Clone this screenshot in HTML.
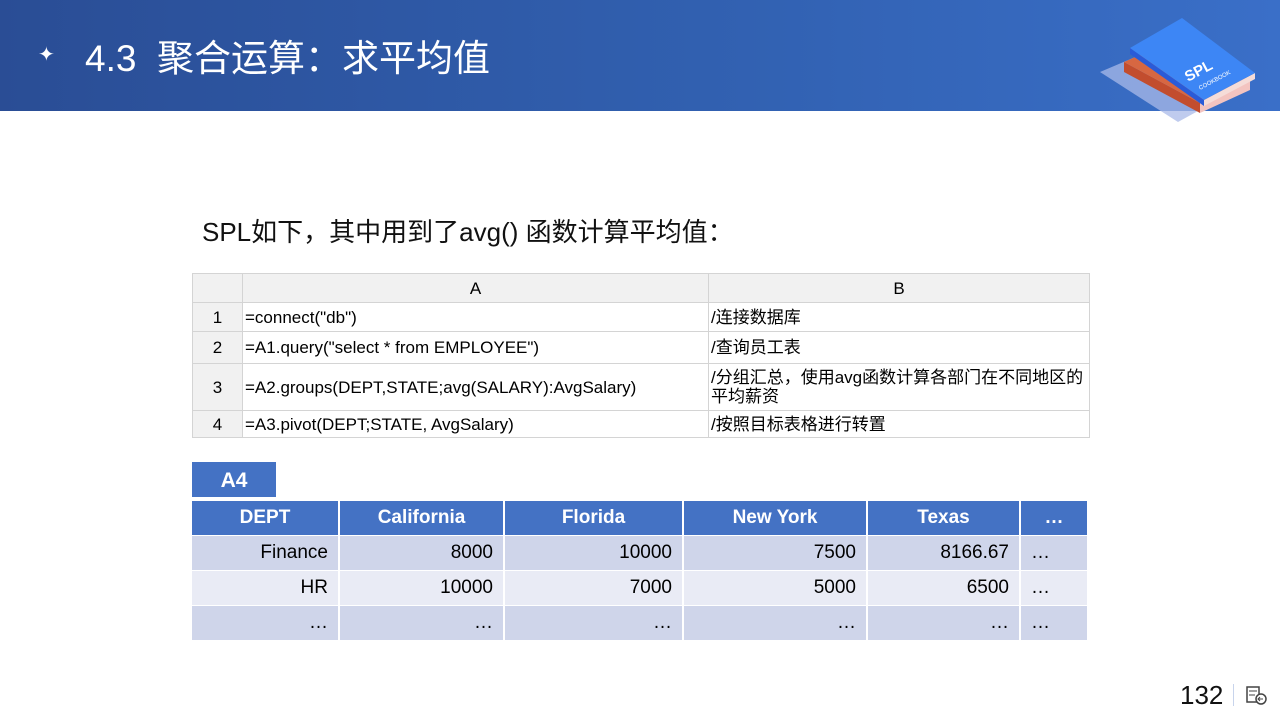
<!DOCTYPE html><html><head><meta charset="utf-8"><style>
body{margin:0;width:1280px;height:720px;position:relative;background:#fff;font-family:"Liberation Sans","Noto Sans CJK SC",sans-serif;overflow:hidden}
.hdr{position:absolute;left:0;top:0;width:1280px;height:111px;background:linear-gradient(90deg,#2a4d95 0%,#3160b0 55%,#3a6fc8 100%)}
.t{position:absolute;left:85px;top:28px;color:#fff;font-size:37px;font-family:"Liberation Sans","Noto Sans CJK SC",sans-serif}
.star{position:absolute;left:38px;top:42px;color:#fff;font-size:20px}
.sub{position:absolute;left:202px;top:212px;font-size:26px;color:#111;font-family:"Liberation Sans","Noto Sans CJK SC",sans-serif}
table{border-collapse:collapse;position:absolute;table-layout:fixed}
.c{left:192px;top:273px;font-size:17px;font-family:"Liberation Sans","Noto Sans CJK SC",sans-serif;color:#000}
.c td{border:1px solid #d4d4d4;padding:0 2px;line-height:19px;overflow:hidden}
.c tr.h td{background:#f1f1f1;text-align:center}
.c td.n{background:#f1f1f1;text-align:center}
.r{top:500px;font-size:19px;border-collapse:separate;border-spacing:2px 0}
.r td{text-align:right;padding:0 10px;height:34px;border-top:1px solid #fff}
.r tr.h td{background:#4472c4;color:#fff;font-weight:bold;text-align:center}
.a{background:#cfd5ea}.b{background:#e9ebf5}
.tab{position:absolute;left:192px;top:462px;width:84px;height:35px;background:#4472c4;color:#fff;font-weight:bold;font-size:21px;text-align:center;line-height:37px}
</style></head><body>
<div class="hdr"></div>
<div class="star">✦</div>
<div class="t">4.3&nbsp; 聚合运算：求平均值</div>
<svg style="position:absolute;left:0;top:0" width="1280" height="130">
<polygon points="1100,72 1140,55 1218,100 1178,122" fill="#aab9e8" opacity=".75"/>
<polygon points="1124,62 1200,103 1200,113 1124,72" fill="#c24d2e"/>
<polygon points="1200,103 1250,80 1250,90 1200,113" fill="#f3c4c0"/>
<polygon points="1124,62 1165,44 1250,80 1200,103" fill="#d76742"/>
<polygon points="1130,48 1204,100 1204,106 1130,54" fill="#2a5bd8"/>
<polygon points="1204,100 1255,73 1255,79 1204,106" fill="#f5dcd8"/>
<polygon points="1130,48 1182,18 1255,73 1204,100" fill="#3d86f5"/>
<text x="1188" y="82" fill="#fff" font-size="15" font-weight="bold" font-family="Liberation Sans" transform="rotate(-28 1188 82)">SPL</text>
<text x="1200" y="90" fill="#fff" font-size="6" font-family="Liberation Sans" transform="rotate(-28 1200 90)">COOKBOOK</text>
</svg>
<div class="sub">SPL如下，其中用到了avg() 函数计算平均值：</div>
<table class="c" style="width:897px">
<colgroup><col style="width:50px"><col style="width:466px"><col style="width:381px"></colgroup>
<tr class="h" style="height:29px"><td></td><td>A</td><td>B</td></tr>
<tr style="height:29px"><td class="n">1</td><td>=connect("db")</td><td>/连接数据库</td></tr>
<tr style="height:32px"><td class="n">2</td><td>=A1.query("select * from EMPLOYEE")</td><td>/查询员工表</td></tr>
<tr style="height:47px"><td class="n">3</td><td>=A2.groups(DEPT,STATE;avg(SALARY):AvgSalary)</td><td>/分组汇总，使用avg函数计算各部门在不同地区的平均薪资</td></tr>
<tr style="height:27px"><td class="n">4</td><td>=A3.pivot(DEPT;STATE, AvgSalary)</td><td>/按照目标表格进行转置</td></tr>
</table>
<div class="tab">A4</div>
<table class="r" style="left:190px">
<tr class="h"><td style="width:126px">DEPT</td><td style="width:143px">California</td><td style="width:157px">Florida</td><td style="width:162px">New York</td><td style="width:131px">Texas</td><td style="width:46px">…</td></tr>
<tr><td class="a">Finance</td><td class="a">8000</td><td class="a">10000</td><td class="a">7500</td><td class="a">8166.67</td><td class="a" style="text-align:left">…</td></tr>
<tr><td class="b">HR</td><td class="b">10000</td><td class="b">7000</td><td class="b">5000</td><td class="b">6500</td><td class="b" style="text-align:left">…</td></tr>
<tr><td class="a">…</td><td class="a">…</td><td class="a">…</td><td class="a">…</td><td class="a">…</td><td class="a" style="text-align:left">…</td></tr>
</table>
<div style="position:absolute;left:1180px;top:680px;font-size:26px;color:#111">132</div>
<div style="position:absolute;left:1233px;top:684px;width:1px;height:22px;background:#c8d4ec"></div>
<svg style="position:absolute;left:1246px;top:686px" width="22" height="20"><rect x="1" y="1" width="12" height="15" fill="none" stroke="#444" stroke-width="1.5"/><line x1="3" y1="5" x2="11" y2="5" stroke="#444"/><line x1="3" y1="9" x2="9" y2="9" stroke="#444"/><circle cx="15" cy="13" r="5" fill="#fff" stroke="#444" stroke-width="1.5"/><path d="M17 13H12M14 11l-2 2 2 2" stroke="#444" fill="none"/></svg>
</body></html>
